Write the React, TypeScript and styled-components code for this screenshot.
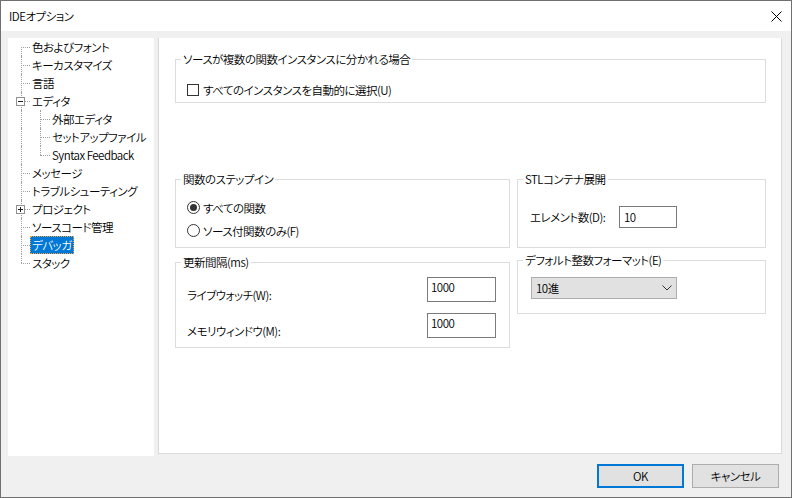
import React from 'react';
import styled, { createGlobalStyle, css } from 'styled-components';

const FONT = `"Noto Sans CJK JP", "Noto Sans", sans-serif`;

const textStyle = css`
  font-family: ${FONT};
  font-size: 11.5px;
  font-weight: 350;
  letter-spacing: -0.5px;
  font-feature-settings: "palt";
  color: #000;
`;

const Global = createGlobalStyle`
  html, body { margin: 0; padding: 0; background: #ffffff; }
  body { ${textStyle} }
  * { box-sizing: border-box; }
`;

const Window = styled.div`
  width: 792px;
  height: 498px;
  border: 1px solid #707070;
  background: #f0f0f0;
  display: flex;
  flex-direction: column;
  overflow: hidden;
`;

const TitleBar = styled.div`
  height: 30px;
  flex: none;
  background: #ffffff;
  display: flex;
  align-items: center;
  justify-content: space-between;
  padding: 0 9px 0 8px;
`;

const Title = styled.span`
  line-height: 16px;
`;

const CloseIcon = () => (
  <svg width="11" height="11" viewBox="0 0 11 11">
    <path d="M0.5 0.5 L10.5 10.5 M10.5 0.5 L0.5 10.5" stroke="#000" strokeWidth="1" fill="none" />
  </svg>
);

const Body = styled.div`
  flex: 1;
  display: flex;
  flex-direction: column;
  padding: 7px 9px 9px 7px;
`;

const Main = styled.div`
  display: flex;
  align-items: flex-start;
  gap: 4px;
  height: 418px;
  flex: none;
`;

const Tree = styled.ul`
  width: 146px;
  height: 418px;
  flex: none;
  margin: 0;
  padding: 0 0 0 2px;
  list-style: none;
  background: #ffffff;
`;

const TreeRow = styled.li`
  display: flex;
  height: 18px;
  align-items: stretch;
`;

type VLine = 'full' | 'top' | 'bottom' | 'none';

const Guide = styled.span<{ $v: VLine; $h: boolean; $x: number }>`
  position: relative;
  flex: none;
  width: 20px;
  &::before {
    content: '';
    position: absolute;
    left: ${p => p.$x}px;
    top: ${p => (p.$v === 'bottom' ? '9px' : '0')};
    height: ${p => (p.$v === 'full' ? '18px' : p.$v === 'none' ? '0' : '9px')};
    border-left: 1px dotted #a0a0a0;
    display: ${p => (p.$v === 'none' ? 'none' : 'block')};
  }
  &::after {
    content: '';
    position: absolute;
    left: ${p => p.$x}px;
    right: 0;
    top: 9px;
    border-top: 1px dotted #a0a0a0;
    display: ${p => (p.$h ? 'block' : 'none')};
  }
`;

const Expander = styled.span`
  position: absolute;
  left: 6px;
  top: 5px;
  width: 9px;
  height: 9px;
  border: 1px solid #919191;
  background: #ffffff;
  z-index: 1;
  display: flex;
`;

const ExpanderGlyph = ({ open }: { open: boolean }) => (
  <svg width="7" height="7" viewBox="0 0 7 7">
    <path d={open ? 'M1 3.5 H6' : 'M1 3.5 H6 M3.5 1 V6'} stroke="#1f1f1f" strokeWidth="1" fill="none" />
  </svg>
);

const NodeLabel = styled.span<{ $selected?: boolean }>`
  display: flex;
  align-items: center;
  height: 18px;
  padding: 0 2px;
  white-space: nowrap;
  line-height: 16px;
  ${p =>
    p.$selected &&
    css`
      background: #0078d7;
      color: #ffffff;
      outline: 1px dotted #f2a33a;
      outline-offset: -1px;
    `}
`;

type Node = {
  label: string;
  level: 0 | 1;
  v0: VLine;
  v1?: VLine;
  expander?: 'open' | 'closed';
  selected?: boolean;
};

const nodes: Node[] = [
  { label: '色およびフォント', level: 0, v0: 'bottom' },
  { label: 'キーカスタマイズ', level: 0, v0: 'full' },
  { label: '言語', level: 0, v0: 'full' },
  { label: 'エディタ', level: 0, v0: 'full', expander: 'open' },
  { label: '外部エディタ', level: 1, v0: 'full', v1: 'full' },
  { label: 'セットアップファイル', level: 1, v0: 'full', v1: 'full' },
  { label: 'Syntax Feedback', level: 1, v0: 'full', v1: 'top' },
  { label: 'メッセージ', level: 0, v0: 'full' },
  { label: 'トラブルシューティング', level: 0, v0: 'full' },
  { label: 'プロジェクト', level: 0, v0: 'full', expander: 'closed' },
  { label: 'ソースコード管理', level: 0, v0: 'full' },
  { label: 'デバッガ', level: 0, v0: 'full', selected: true },
  { label: 'スタック', level: 0, v0: 'top' },
];

const Panel = styled.div`
  flex: 1;
  height: 416px;
  background: #ffffff;
  border: 1px solid #dadada;
  border-top: none;
  padding: 13px 0 0 16px;
`;

const Group = styled.fieldset<{ $w?: number }>`
  margin: 0;
  padding: 0;
  border: 1px solid #dcdcdc;
  min-inline-size: 0;
  width: ${p => (p.$w ? `${p.$w}px` : 'auto')};
`;

const Legend = styled.legend`
  margin-left: 5px;
  padding: 0 2px;
  line-height: 16px;
`;

const GroupBody = styled.div<{ $pad: string }>`
  padding: ${p => p.$pad};
  display: flex;
  flex-direction: column;
`;

const CheckRow = styled.label`
  display: flex;
  align-items: center;
  gap: 4px;
  height: 16px;
  line-height: 16px;
`;

const CheckBox = styled.span`
  width: 12px;
  height: 12px;
  border: 1px solid #333333;
  background: #ffffff;
  flex: none;
`;

const RadioRow = styled.label`
  display: flex;
  align-items: center;
  gap: 3px;
  height: 23px;
  line-height: 16px;
`;

const Radio = styled.span<{ $checked?: boolean }>`
  width: 13px;
  height: 13px;
  border-radius: 50%;
  border: 1px solid #333333;
  background: #ffffff;
  flex: none;
  display: flex;
  align-items: center;
  justify-content: center;
  &::after {
    content: '';
    width: 7px;
    height: 7px;
    border-radius: 50%;
    background: #333333;
    display: ${p => (p.$checked ? 'block' : 'none')};
  }
`;

const Columns = styled.div`
  margin-top: 68px;
  display: grid;
  grid-template-columns: 335px 249px;
  column-gap: 7px;
  align-items: start;
`;

const Column = styled.div<{ $gap: number }>`
  display: flex;
  flex-direction: column;
  gap: ${p => p.$gap}px;
`;

const FieldRow = styled.div`
  display: flex;
  align-items: center;
  height: 22px;
`;

const FieldLabel = styled.span<{ $w?: number }>`
  width: ${p => (p.$w ? `${p.$w}px` : 'auto')};
  line-height: 16px;
  white-space: nowrap;
`;

const TextBox = styled.input<{ $w: number; $h: number; $top?: boolean }>`
  ${textStyle}
  width: ${p => p.$w}px;
  height: ${p => p.$h}px;
  border: 1px solid #7a7a7a;
  background: #ffffff;
  margin: 0;
  outline: none;
  line-height: 16px;
  ${p =>
    p.$top
      ? css`
          padding: 0 3px 6px 3px;
        `
      : css`
          padding: 0 4px;
        `}
`;

const IntervalRow = styled.div`
  display: flex;
  justify-content: space-between;
  align-items: flex-start;
  height: 25px;
  & + & {
    margin-top: 11px;
  }
`;

const IntervalLabel = styled.span`
  padding-top: 10px;
  line-height: 16px;
`;

const Select = styled.div`
  width: 146px;
  height: 22px;
  border: 1px solid #adadad;
  background: #e1e1e1;
  display: flex;
  align-items: center;
  justify-content: space-between;
  padding: 0 4px 0 4px;
  line-height: 16px;
`;

const Chevron = () => (
  <svg width="10" height="6" viewBox="0 0 10 6">
    <path d="M0.5 0.5 L5 5 L9.5 0.5" stroke="#333" strokeWidth="1" fill="none" />
  </svg>
);

const Footer = styled.div`
  display: flex;
  justify-content: flex-end;
  gap: 8px;
  padding: 8px 3px 0 0;
`;

const Button = styled.button<{ $primary?: boolean }>`
  ${textStyle}
  width: 87px;
  height: 24px;
  margin: 0;
  padding: 0;
  background: #e1e1e1;
  border: ${p => (p.$primary ? '2px solid #0078d7' : '1px solid #adadad')};
  line-height: 16px;
`;

export default function App() {
  return (
    <>
      <Global />
      <Window>
        <TitleBar>
          <Title>IDEオプション</Title>
          <CloseIcon />
        </TitleBar>
        <Body>
          <Main>
            <Tree>
              {nodes.map(n => (
                <TreeRow key={n.label}>
                  <Guide $v={n.v0} $h={n.level === 0} $x={11}>
                    {n.expander && (
                      <Expander>
                        <ExpanderGlyph open={n.expander === 'open'} />
                      </Expander>
                    )}
                  </Guide>
                  {n.level === 1 && <Guide $v={n.v1 || 'full'} $h $x={10} />}
                  <NodeLabel $selected={n.selected}>{n.label}</NodeLabel>
                </TreeRow>
              ))}
            </Tree>
            <Panel>
              <Group $w={591}>
                <Legend>ソースが複数の関数インスタンスに分かれる場合</Legend>
                <GroupBody $pad="15px 0 4px 11px">
                  <CheckRow>
                    <CheckBox />
                    すべてのインスタンスを自動的に選択(U)
                  </CheckRow>
                </GroupBody>
              </Group>
              <Columns>
                <Column $gap={6}>
                  <Group>
                    <Legend>関数のステップイン</Legend>
                    <GroupBody $pad="9px 0 5px 11px">
                      <RadioRow>
                        <Radio $checked />
                        すべての関数
                      </RadioRow>
                      <RadioRow>
                        <Radio />
                        ソース付関数のみ(F)
                      </RadioRow>
                    </GroupBody>
                  </Group>
                  <Group>
                    <Legend>更新間隔(ms)</Legend>
                    <GroupBody $pad="7px 13px 9px 11px">
                      <IntervalRow>
                        <IntervalLabel>ライブウォッチ(W):</IntervalLabel>
                        <TextBox $w={69} $h={25} $top readOnly value="1000" />
                      </IntervalRow>
                      <IntervalRow>
                        <IntervalLabel>メモリウィンドウ(M):</IntervalLabel>
                        <TextBox $w={69} $h={25} $top readOnly value="1000" />
                      </IntervalRow>
                    </GroupBody>
                  </Group>
                </Column>
                <Column $gap={4}>
                  <Group>
                    <Legend>STLコンテナ展開</Legend>
                    <GroupBody $pad="19px 0 19px 12px">
                      <FieldRow>
                        <FieldLabel $w={89}>エレメント数(D):</FieldLabel>
                        <TextBox $w={58} $h={22} readOnly value="10" />
                      </FieldRow>
                    </GroupBody>
                  </Group>
                  <Group>
                    <Legend>デフォルト整数フォーマット(E)</Legend>
                    <GroupBody $pad="9px 0 14px 13px">
                      <Select>
                        <span>10進</span>
                        <Chevron />
                      </Select>
                    </GroupBody>
                  </Group>
                </Column>
              </Columns>
            </Panel>
          </Main>
          <Footer>
            <Button $primary>OK</Button>
            <Button>キャンセル</Button>
          </Footer>
        </Body>
      </Window>
    </>
  );
}
